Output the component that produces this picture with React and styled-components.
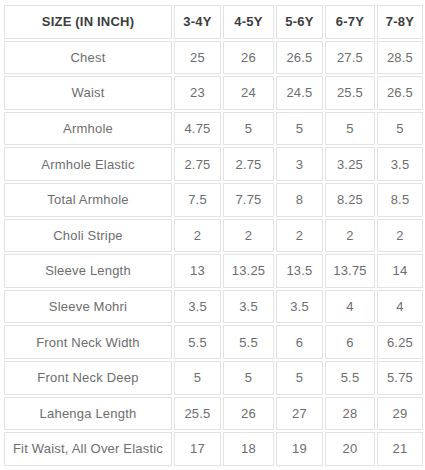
import React from 'react'
import styled, { createGlobalStyle } from 'styled-components'

const sizes = ['3-4Y', '4-5Y', '5-6Y', '6-7Y', '7-8Y']

const rows = [
  ['Chest', '25', '26', '26.5', '27.5', '28.5'],
  ['Waist', '23', '24', '24.5', '25.5', '26.5'],
  ['Armhole', '4.75', '5', '5', '5', '5'],
  ['Armhole Elastic', '2.75', '2.75', '3', '3.25', '3.5'],
  ['Total Armhole', '7.5', '7.75', '8', '8.25', '8.5'],
  ['Choli Stripe', '2', '2', '2', '2', '2'],
  ['Sleeve Length', '13', '13.25', '13.5', '13.75', '14'],
  ['Sleeve Mohri', '3.5', '3.5', '3.5', '4', '4'],
  ['Front Neck Width', '5.5', '5.5', '6', '6', '6.25'],
  ['Front Neck Deep', '5', '5', '5', '5.5', '5.75'],
  ['Lahenga Length', '25.5', '26', '27', '28', '29'],
  ['Fit Waist, All Over Elastic', '17', '18', '19', '20', '21'],
]

const colWidths = [168, 47, 51, 47, 50, 46]

const SizeChart = () => (
  <Wrapper>
    <Table>
      <colgroup>
        {colWidths.map((w, i) => <col key={i} style={{ width: w }} />)}
      </colgroup>
      <thead>
        <tr>
          <HeadCell>Size (in inch)</HeadCell>
          {sizes.map(size => <HeadCell key={size}>{size}</HeadCell>)}
        </tr>
      </thead>
      <tbody>
        {rows.map(row => (
          <tr key={row[0]}>
            {row.map((value, index) => <Cell key={index}>{value}</Cell>)}
          </tr>
        ))}
      </tbody>
    </Table>
  </Wrapper>
)

const GlobalStyle = createGlobalStyle`
  body {
    margin: 0;
    background: #fff;
    font-family: "Liberation Sans", Arial, sans-serif;
  }
`

const Wrapper = styled.div`
  padding: 3px 0 0 2px;
`

const Table = styled.table`
  table-layout: fixed;
  border-collapse: separate;
  border-spacing: 2px;
  width: 423px;
`

const Cell = styled.td`
  box-sizing: border-box;
  height: 33.6px;
  padding: 0;
  border: 1.5px solid #e2e2e2;
  text-align: center;
  vertical-align: middle;
  font-size: 13px;
  letter-spacing: 0.2px;
  color: #6d6d6d;
  white-space: nowrap;
`

const HeadCell = styled(Cell).attrs({ as: 'th' })`
  font-weight: 700;
  text-transform: uppercase;
  color: #3d3d3d;
`

const App = () => (
  <>
    <GlobalStyle />
    <SizeChart />
  </>
)

export default App
